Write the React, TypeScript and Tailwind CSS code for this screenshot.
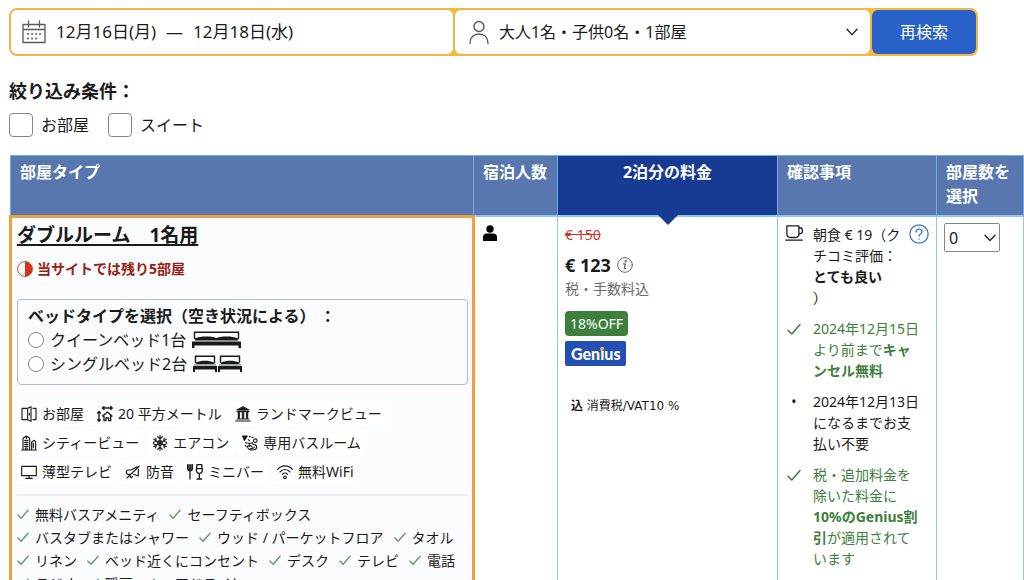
import type { ReactNode } from "react";

function Icon({ children, className = "size-4" }: { children: ReactNode; className?: string }) {
  return (
    <svg
      className={`shrink-0 ${className}`}
      viewBox="0 0 24 24"
      fill="none"
      stroke="currentColor"
      strokeWidth="1.7"
      strokeLinecap="round"
      strokeLinejoin="round"
      aria-hidden="true"
    >
      {children}
    </svg>
  );
}

function Check({ className }: { className: string }) {
  return (
    <svg className={`shrink-0 ${className}`} viewBox="0 0 14 14" fill="none" stroke="currentColor" strokeWidth="1.5" strokeLinecap="round" strokeLinejoin="round" aria-hidden="true">
      <path d="M1 8.2 4.8 12 13 2.6" />
    </svg>
  );
}

function Chevron({ className }: { className: string }) {
  return (
    <svg className={`shrink-0 ${className}`} viewBox="0 0 12 8" fill="none" stroke="currentColor" strokeWidth="1.3" strokeLinecap="round" strokeLinejoin="round" aria-hidden="true">
      <path d="M1 1.2 6 6.6 11 1.2" />
    </svg>
  );
}

const facilities: { label: string; icon: ReactNode }[] = [
  {
    label: "お部屋",
    icon: <path d="M10 3.500H1.500v17H10M10 3.500 15 1v22l-5-2.500zM18 3.500h4.500v17H18M12.500 11v2.500" />,
  },
  {
    label: "20 平方メートル",
    icon: (
      <>
        <path d="M8 3h15M10.500 .8 8 3l2.500 2.200M20.500 .8 23 3l-2.500 2.200M3 8v15M.8 10.500 3 8l2.200 2.500M.8 20.500 3 23l2.200-2.500" strokeWidth="2" />
        <path d="m8.500 15 7-6 7 6h-2v7h-3v-4h-4v4h-3v-7z" strokeWidth="2" />
      </>
    ),
  },
  {
    label: "ランドマークビュー",
    icon: (
      <>
        <path d="M12 1 3 6h18zM3 8.500h18M5 10v8M6.500 10v8M11 10v8M13 10v8M17.500 10v8M19 10v8M3 19.500h18M1 22.500h22" />
        <path d="M12 2.500 6 5.500h12z" fill="currentColor" />
      </>
    ),
  },
  {
    label: "シティービュー",
    icon: (
      <>
        <path d="M1 22.500h22M3 22V5l5-3.500L13 5v17M16 22V10.500L20 8l2 2v12M8 1.500V5M18.500 12v7" />
        <path d="M5.500 8h5M5.500 11h5M5.500 14h5M5.500 17h5M6.500 22v-2.500h3V22" />
      </>
    ),
  },
  {
    label: "エアコン",
    icon: (
      <path d="M12 1v22M2.500 6.500l19 11M2.500 17.500l19-11M8.500 2.500 12 6l3.500-3.500M8.500 21.500 12 18l3.500 3.500M2 11l4.800-1.500L5.500 4.800M22 13l-4.800 1.500 1.300 4.700M2 13l4.800 1.500-1.300 4.700M22 11l-4.800-1.500 1.300-4.700M12 8l3.500 2v4L12 16l-3.500-2v-4z" />
    ),
  },
  {
    label: "専用バスルーム",
    icon: (
      <>
        <path d="M1 1.500h7L3.500 8z" fill="currentColor" />
        <path d="M11 2.500h1.500M15 3.500h1.500M5.500 11l1 1.500M9.500 7l1.500 1.500M5 15.500l1 1.500" />
        <circle cx="20" cy="8.500" r="2.600" />
        <path d="M8.500 12c2 1 4 1 7-.5l1.500 3c3 0 5 1 5 3.500 0 3-3 4.500-6 4.500-4.500 0-7.500-2-8-5.500 3-1.500 6-1 7.500 1M11 13v4M13 20c2 .5 4 0 5.500-1.500" />
      </>
    ),
  },
  {
    label: "薄型テレビ",
    icon: <path d="M1 3.500h22v14H1zM12 17.500V21M7 21.500h10" />,
  },
  {
    label: "防音",
    icon: (
      <path d="M3 21 21.500 3M7.500 15.500H5c-2 0-3-1-3-3s1-3.500 3-3.500h4l9-5M20 7.500v10.500l-7-2.500M8 16l-1 1 2.500 4 2-2.500" />
    ),
  },
  {
    label: "ミニバー",
    icon: (
      <>
        <path d="M1 1v6c0 2 1.500 3 3.500 3S8 9 8 7V1M3.300 1v8M5.700 1v8M4.500 10v12.500" strokeWidth="2" />
        <path d="M15 1h7l1 8c0 3-1.500 5-4.500 5S14 12 14 9zM14.500 7h8M18.500 14v8M15 22.500h7" strokeWidth="2" />
      </>
    ),
  },
  {
    label: "無料WiFi",
    icon: (
      <>
        <path d="M1 8c6-7 16-7 22 0M4.500 12c4.500-5 10.500-5 15 0M8 15.500c2.500-2.500 5.500-2.500 8 0" />
        <circle cx="12" cy="20" r="2" />
      </>
    ),
  },
];

const amenities = [
  "無料バスアメニティ",
  "セーフティボックス",
  "バスタブまたはシャワー",
  "ウッド / パーケットフロア",
  "タオル",
  "リネン",
  "ベッド近くにコンセント",
  "デスク",
  "テレビ",
  "電話",
  "ラジオ",
  "暖房",
  "ヘアドライヤー",
];

function Bed({ wide = false }: { wide?: boolean }) {
  return (
    <svg className={wide ? "h-[17px] w-[49px]" : "h-[17px] w-6"} viewBox={wide ? "0 0 49 17" : "0 0 24 17"} aria-hidden="true">
      {wide ? (
        <>
          <path d="M2.500 8V1.200h44V8" fill="none" stroke="#1a1a1a" strokeWidth="1.400" />
          <path d="M3 9.500V7.500c6-2.500 15-2.500 21.500-.5 6.500-2 15.500-2 21.500.5v2zM0 10.500h49V17h-2.500v-2.500h-44V17H0z" fill="#1a1a1a" />
        </>
      ) : (
        <>
          <path d="M2.500 8V1.200h19V8" fill="none" stroke="#1a1a1a" strokeWidth="1.400" />
          <path d="M3 9V7.500c5-2.500 13-2.500 18 0V9zM0 11h24v6h-2v-2.500H2V17H0z" fill="#1a1a1a" />
          <path d="M1 9.200h22v1.400H1z" fill="#82908b" />
        </>
      )}
    </svg>
  );
}

function SearchBar() {
  return (
    <form
      className="mr-[46px] grid grid-cols-[443fr_416fr_104px] gap-[2px] rounded-lg border-2 border-[#f4b93c] bg-[#f4b93c]"
      onSubmit={(e) => e.preventDefault()}
    >
      <button type="button" className="flex h-11 items-center gap-[10px] rounded-md bg-white px-[11px] text-[17px]">
        <Icon className="size-6 text-[#595959]">
          <path d="M1 4.500h22v18H1zM1 9.500h22M6.500 1v6M17.500 1v6" strokeWidth="1.300" />
          <path d="M6 14h.1M10 14h.1M14 14h.1M18 14h.1M6 18.500h.1M10 18.500h.1M14 18.500h.1" strokeWidth="1.800" />
        </Icon>
        <span>12月16日(月)</span>
        <span>—</span>
        <span>12月18日(水)</span>
      </button>
      <button type="button" className="flex h-11 items-center rounded-md bg-white px-3 text-base">
        <Icon className="mr-2 size-6 text-[#595959]">
          <circle cx="12" cy="6.500" r="5" strokeWidth="1.400" />
          <path d="M3 23.500c0-6 3.500-9.500 9-9.500s9 3.500 9 9.500" strokeWidth="1.400" />
        </Icon>
        <span>大人1名・子供0名・1部屋</span>
        <Chevron className="ml-auto h-2 w-3" />
      </button>
      <button type="submit" className="h-11 rounded-md bg-[#2962c8] text-base text-white">
        再検索
      </button>
    </form>
  );
}

function Filter({ label }: { label: string }) {
  return (
    <label className="flex items-center gap-2">
      <input type="checkbox" className="size-6 appearance-none rounded border border-[#868686] bg-white checked:bg-[#2962c8]" />
      {label}
    </label>
  );
}

function BedOption({ label, children }: { label: string; children: ReactNode }) {
  return (
    <label className="flex items-center gap-[6px] leading-6">
      <input type="radio" name="bed" className="size-4 appearance-none rounded-full border border-[#868686] bg-white checked:border-4" />
      {label}
      {children}
    </label>
  );
}

function RoomCell() {
  return (
    <td className="border-[3px] border-[#eda03c] bg-[#fafcff] pt-[3px] pr-1 pl-[5px] align-top">
      <a href="#room" className="text-[19px] leading-7 font-bold underline decoration-2 underline-offset-2">
        ダブルルーム　1名用
      </a>
      <p className="mt-2 flex items-center gap-1 text-sm leading-6 font-bold text-[#98210f]">
        <svg className="size-4" viewBox="0 0 16 16" aria-hidden="true">
          <circle cx="8" cy="8" r="7.400" fill="#fff" stroke="#d0341d" strokeWidth="0.900" />
          <path d="M8 .5a7.500 7.500 0 0 1 0 15z" fill="#d0341d" />
        </svg>
        当サイトでは残り5部屋
      </p>
      <fieldset className="mt-[18px] rounded-sm border border-[#a9bde2] px-[10px] pt-1 pb-2 text-base">
        <p className="leading-6 font-bold">ベッドタイプを選択（空き状況による） ：</p>
        <BedOption label="クイーンベッド1台">
          <Bed wide />
        </BedOption>
        <BedOption label="シングルベッド2台">
          <span className="flex gap-px">
            <Bed />
            <Bed />
          </span>
        </BedOption>
      </fieldset>
      <ul className="mt-[17px] flex flex-wrap gap-[5px] border-b-2 border-[#eceef2] pb-[10px] text-sm leading-6">
        {facilities.map((f) => (
          <li key={f.label} className="flex items-center gap-[5px] rounded bg-white px-1">
            <Icon>{f.icon}</Icon>
            {f.label}
          </li>
        ))}
      </ul>
      <ul className="flex flex-wrap gap-x-[10px] pt-[7px] text-sm leading-[23px]">
        {amenities.map((a) => (
          <li key={a} className="flex items-center gap-[6px]">
            <Check className="size-3 text-[#5a9e58]" />
            {a}
          </li>
        ))}
      </ul>
    </td>
  );
}

function PriceCell() {
  return (
    <td className="border border-t-2 border-[#8ec5f9] px-[7px] pt-2 align-top">
      <s className="block text-sm leading-5 text-[#cc3a2e]">€ 150</s>
      <p className="mt-[6px] flex items-center gap-[6px] text-lg leading-7 font-bold">
        € 123
        <Icon className="size-4 text-[#6b6b6b]">
          <circle cx="12" cy="12" r="11" strokeWidth="1.500" />
          <path d="M10 10.500h2.500L11 17.500h2" strokeWidth="2" />
          <circle cx="13" cy="6.500" r="1" fill="currentColor" />
        </Icon>
      </p>
      <p className="text-sm leading-5 text-[#6b6b6b]">税・手数料込</p>
      <div className="mt-3 flex flex-col items-start gap-[5px] text-white">
        <span className="rounded bg-[#3c803c] px-[5px] text-sm leading-[25px]">18%OFF</span>
        <span className="rounded-xs bg-[#214fb4] px-[6px] font-['Lato','Noto_Sans',sans-serif] text-base leading-[25px] font-black">
          Gen
          <span className="relative">
            i
            <span className="absolute top-[3px] left-0 size-1 rounded-full bg-[#f5a93c]" />
          </span>
          us
        </span>
      </div>
      <p className="mt-[30px] pl-[6px] font-['DejaVu_Sans','Noto_Sans_CJK_JP',sans-serif] text-xs leading-5">
        <b>込</b> 消費税/VAT10 %
      </p>
    </td>
  );
}

function ConditionsCell() {
  return (
    <td className="border border-t-2 border-[#8ec5f9] px-[7px] pt-[7px] align-top text-sm leading-[21px]">
      <ul className="flex flex-col gap-[10px]">
        <li className="flex items-start">
          <Icon className="mr-[10px] size-[18px]">
            <path d="M2.500 2.500h16V13c0 3-2 5-5 5h-6c-3 0-5-2-5-5zM18.500 5H20c4.500 0 4.500 8 0 8h-1.500M1 21.500h22" />
          </Icon>
          <p className="flex-1">
            朝食 € 19（クチコミ評価：
            <strong className="block">とても良い</strong>）
          </p>
          <button type="button" aria-label="朝食" className="text-[#3b78c8]">
            <Icon className="size-5">
              <circle cx="12" cy="12" r="11" strokeWidth="1.500" />
              <path d="M8.500 9.500c0-4.500 7-4.500 7 0 0 2.500-3.500 2.500-3.500 5M12 18v.1" />
            </Icon>
          </button>
        </li>
        <li className="flex items-start px-[2px] pr-2 text-[#3c803c]">
          <Check className="mt-1 mr-3 size-[14px]" />
          <p className="flex-1">
            2024年12月15日より前まで<strong>キャンセル無料</strong>
          </p>
        </li>
        <li className="flex items-start pr-2 pl-[2px]">
          <span className="mr-3 w-[14px] text-center">•</span>
          <p className="flex-1">2024年12月13日になるまでお支払い不要</p>
        </li>
        <li className="flex items-start pr-2 pl-[2px] text-[#3c803c]">
          <Check className="mt-1 mr-3 size-[14px]" />
          <p className="flex-1">
            税・追加料金を除いた料金に<strong>10%のGenius割引</strong>が適用されています
          </p>
        </li>
      </ul>
    </td>
  );
}

export default function App() {
  return (
    <main
      lang="ja"
      className="bg-white pt-2 pl-[9px] font-['Noto_Sans','Noto_Sans_CJK_JP',sans-serif] text-[#1a1a1a]"
    >
      <SearchBar />
      <h2 className="mt-[21px] text-lg leading-7 font-bold">絞り込み条件：</h2>
      <div className="mt-2 flex gap-[19px] text-base leading-6">
        <Filter label="お部屋" />
        <Filter label="スイート" />
      </div>

      <table className="mt-[18px] w-full table-fixed border-collapse">
        <colgroup>
          <col />
          <col className="w-[84px]" />
          <col className="w-[220px]" />
          <col className="w-[159px]" />
          <col className="w-[87px]" />
        </colgroup>
        <thead>
          <tr className="bg-[#5777ae] text-left align-top text-base leading-6 text-white">
            <th className="border border-[#6baef5] px-[9px] pt-1 pb-[7px]">部屋タイプ</th>
            <th className="border border-[#6baef5] px-[9px] pt-1 pb-[7px]">宿泊人数</th>
            <th className="relative border border-[#6baef5] bg-[#173b93] px-[9px] pt-1 pb-[7px] text-center">
              2泊分の料金
              <span className="absolute top-full left-1/2 -translate-x-1/2 border-x-[10px] border-t-[10px] border-x-transparent border-t-[#173b93]" />
            </th>
            <th className="border border-[#6baef5] px-[9px] pt-1 pb-[7px]">確認事項</th>
            <th className="border border-[#6baef5] px-[9px] pt-1 pb-[7px]">部屋数を選択</th>
          </tr>
        </thead>
        <tbody>
          <tr>
            <RoomCell />
            <td className="border border-t-2 border-[#8ec5f9] px-[7px] pt-2 align-top">
              <svg className="size-4" viewBox="0 0 16 16" role="img" aria-label="1名">
                <circle cx="8" cy="4" r="3.700" />
                <path d="M1 16v-4c0-2 1.500-3.500 3.500-3.500h7c2 0 3.500 1.500 3.500 3.500v4z" />
              </svg>
            </td>
            <PriceCell />
            <ConditionsCell />
            <td className="border border-t-2 border-[#8ec5f9] px-[7px] pt-[6px] align-top">
              <div className="grid w-14">
                <select
                  aria-label="部屋数を選択"
                  className="col-start-1 row-start-1 h-[29px] appearance-none rounded-xs border border-[#868686] bg-white pl-1 text-base leading-6"
                >
                  <option>0</option>
                  <option>1</option>
                  <option>2</option>
                </select>
                <Chevron className="pointer-events-none col-start-1 row-start-1 mr-1 h-2 w-3 self-center justify-self-end" />
              </div>
            </td>
          </tr>
        </tbody>
      </table>
    </main>
  );
}
